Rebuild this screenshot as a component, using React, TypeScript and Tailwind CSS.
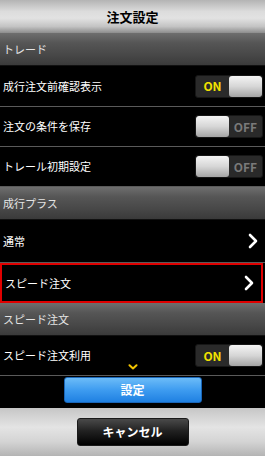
import React from "react";

const font = { fontFamily: '"Noto Sans CJK JP", "Noto Sans", sans-serif' };

function Toggle({ on }: { on: boolean }) {
  return (
    <div className="flex h-[23px] w-[68px] rounded-[3px] bg-[#2a2a2a] border border-[#161616] overflow-hidden">
      {on ? (
        <>
          <div className="flex w-[34px] items-center justify-center text-[12px] font-bold text-[#f2e200]">ON</div>
          <div className="w-[34px] rounded-[3px] bg-[linear-gradient(#f4f4f4,#d6d6d6_50%,#a4a4a4)]" />
        </>
      ) : (
        <>
          <div className="w-[34px] rounded-[3px] bg-[linear-gradient(#f4f4f4,#d6d6d6_50%,#a4a4a4)]" />
          <div className="flex w-[34px] items-center justify-center text-[12px] font-bold text-[#7a7a7a]">OFF</div>
        </>
      )}
    </div>
  );
}

function Section({ label }: { label: string }) {
  return (
    <div className="flex h-[33px] items-center pl-[3px] text-[11px] text-[#e4e4e4] bg-[linear-gradient(#6e6e6e,#565656_30%,#474747_70%,#3a3a3a)] border-b border-[#111]">
      {label}
    </div>
  );
}

function Row({ label, children, h = "h-[40px]" }: { label: string; children?: React.ReactNode; h?: string }) {
  return (
    <div className={`flex ${h} items-center justify-between pl-[3px] pr-[2px] text-[11px] text-white border-b border-[#5a5a5a]`}>
      <span>{label}</span>
      {children}
    </div>
  );
}

function Chevron() {
  return (
    <svg width="10" height="16" viewBox="0 0 10 16" className="mr-[5px]">
      <path d="M2 2 L8 8 L2 14" fill="none" stroke="#fff" strokeWidth="2.6" strokeLinecap="round" strokeLinejoin="round" />
    </svg>
  );
}

export default function App() {
  return (
    <div style={font} className="w-[265px] h-[456px] bg-black flex flex-col overflow-hidden">
      <div className="h-[33px] flex items-center justify-center text-[13px] font-bold text-black bg-[linear-gradient(#b4b4b4,#dcdcdc_35%,#e2e2e2_55%,#c4c4c4_80%,#8c8c8c)]">
        注文設定
      </div>
      <div className="relative h-[375px] overflow-hidden bg-black">
        <Section label="トレード" />
        <Row label="成行注文前確認表示" h="h-[41px]">
          <Toggle on />
        </Row>
        <Row label="注文の条件を保存">
          <Toggle on={false} />
        </Row>
        <Row label="トレール初期設定">
          <Toggle on={false} />
        </Row>
        <Section label="成行プラス" />
        <Row label="通常" h="h-[43px]">
          <Chevron />
        </Row>
        <div className="flex h-[40px] items-center justify-between pl-[3px] pr-[2px] text-[11px] text-white border-2 border-[#e00000] mr-[2px]">
          <span>スピード注文</span>
          <Chevron />
        </div>
        <Section label="スピード注文" />
        <Row label="スピード注文利用" h="h-[40px]">
          <Toggle on />
        </Row>
        <div className="absolute left-0 right-0 bottom-0 flex flex-col items-center pb-[5px]">
          <svg width="10" height="6" viewBox="0 0 10 6" className="mb-[7px]">
            <path d="M1.5 1.2 L5 4.5 L8.5 1.2" fill="none" stroke="#f2c400" strokeWidth="2" strokeLinecap="round" strokeLinejoin="round" />
          </svg>
          <div className="flex h-[26px] w-[138px] items-center justify-center rounded-[3px] text-[12px] font-bold text-white bg-[linear-gradient(#6cbcf8,#3e9cf0_50%,#1f80e2)] border border-[#1a66b8]">
            設定
          </div>
        </div>
      </div>
      <div className="flex-1 flex items-center justify-center bg-[linear-gradient(#c6c6c6,#e4e4e4_40%,#d4d4d4_70%,#b4b4b4)]">
        <div className="flex h-[28px] w-[112px] items-center justify-center rounded-[3px] text-[12px] font-bold text-white bg-[linear-gradient(#4a4a4a,#222_45%,#000)] border border-[#1a1a1a]">
          キャンセル
        </div>
      </div>
    </div>
  );
}
